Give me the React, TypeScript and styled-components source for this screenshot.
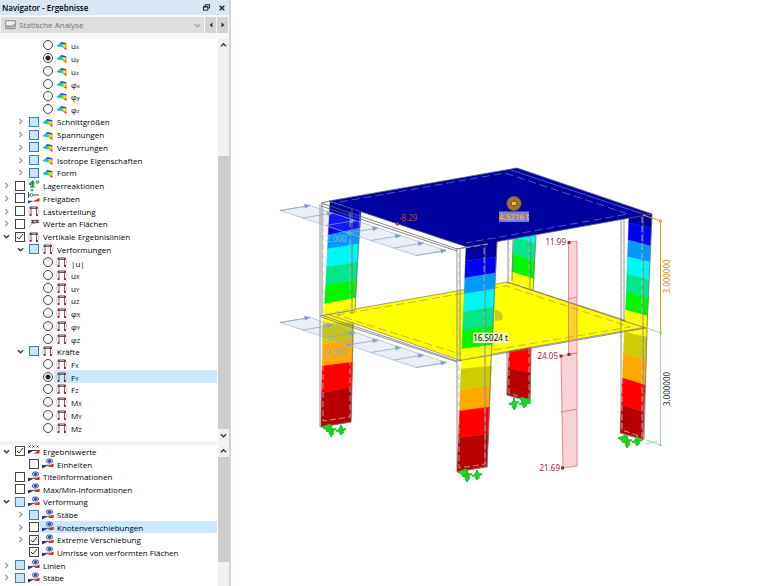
import React, { useState } from "react";
import styled, { createGlobalStyle } from "styled-components";

const GlobalStyle = createGlobalStyle`
  *, *::before, *::after { box-sizing: border-box; }
  html, body, #root { height: 100%; }
  body {
    margin: 0;
    background: #fff;
    color: #000008;
    font-family: "Open Sans", "Noto Sans", sans-serif;
    font-size: 8px;
    line-height: 12px;
  }
  button, select, input { font: inherit; color: inherit; }
`;

const Page = styled.div`
  display: flex;
  height: 100vh;
  overflow: hidden;
`;

const Navigator = styled.aside`
  display: flex;
  flex-direction: column;
  flex: 0 0 231px;
  border-right: 2px solid #d2d2de;
  background: #fff;
`;

const TitleBar = styled.header`
  display: flex;
  align-items: center;
  flex: 0 0 15px;
  padding: 0 0 0 2px;
  background: #d9e7f5;
`;

const Title = styled.h1`
  flex: 1;
  margin: 0;
  font-size: 8px;
  font-weight: 600;
  line-height: 14px;
`;

const TitleButton = styled.button`
  display: grid;
  place-items: center;
  width: 15px;
  height: 14px;
  padding: 0;
  border: 0;
  background: none;
`;

const Toolbar = styled.div`
  display: flex;
  gap: 1px;
  flex: 0 0 24px;
  padding: 2px 1px 6px 1px;
  background: #f6f6f6;
`;

const Combo = styled.label`
  display: flex;
  align-items: center;
  flex: 1;
  gap: 3px;
  padding: 0 3px 0 4px;
  background: #dedede;
`;

const ComboSelect = styled.select`
  flex: 1;
  min-width: 0;
  padding: 0;
  border: 0;
  appearance: none;
  background: none;
  color: #757575;
  opacity: 1;
`;

const StepButton = styled.button`
  display: grid;
  place-items: center;
  width: 11px;
  padding: 0;
  border: 0;
  background: #d4d4d4;
`;

const TreePane = styled.section<{ $rows: number; $gap?: boolean }>`
  display: flex;
  flex: ${(p) => p.$rows} 1 0;
  min-height: 0;
  ${(p) => p.$gap && "border-bottom: 4px solid #f4f4f4; flex-basis: 9px;"}
`;

const Tree = styled.ul<{ $pad: number }>`
  display: grid;
  grid-auto-rows: 1fr;
  flex: 1;
  margin: 0;
  padding: 0 1px ${(p) => p.$pad}px 0;
  list-style: none;
`;

const Row = styled.li<{ $level: number }>`
  display: flex;
  align-items: center;
  min-height: 0;
  padding-left: ${(p) => p.$level * 14}px;
`;

const Expander = styled.button`
  display: grid;
  place-items: center;
  flex: 0 0 15px;
  height: 10px;
  padding: 0 2px 0 0;
  border: 0;
  background: none;
`;

const Spacer = styled.span`
  flex: 0 0 15px;
`;

const Check = styled.input<{ $partial?: boolean }>`
  flex: none;
  width: 10px;
  height: 10px;
  margin: 0;
  appearance: none;
  border: 1px solid ${(p) => (p.$partial ? "#3f7fb5" : "#444")};
  background: ${(p) => (p.$partial ? "#cce4f7" : "#fff")};
  &:checked {
    background: #fff
      url("data:image/svg+xml,%3Csvg xmlns='http://www.w3.org/2000/svg' viewBox='0 0 8 8'%3E%3Cpath d='M1 4l2 2 4-5' fill='none' stroke='%23333'/%3E%3C/svg%3E");
  }
`;

const Radio = styled.input`
  flex: none;
  width: 10px;
  height: 10px;
  margin: 0;
  appearance: none;
  border: 1px solid #444;
  border-radius: 50%;
  background: #fff;
  &:checked {
    background: radial-gradient(circle, #222 0 2px, #fff 3px);
  }
`;

const ItemLabel = styled.label<{ $selected?: boolean }>`
  display: flex;
  align-items: center;
  align-self: stretch;
  flex: 1;
  gap: 3px;
  margin-left: 1px;
  padding-left: 2px;
  white-space: nowrap;
  background: ${(p) => (p.$selected ? "#cce8ff" : "transparent")};
`;

const ItemText = styled.span<{ $low?: boolean }>`
  padding-top: ${(p) => (p.$low ? 3 : 1)}px;
  line-height: 10px;
  font-weight: 500;
`;

const Sub = styled.span`
  font-size: 6px;
`;

const Scroll = styled.div`
  display: flex;
  flex-direction: column;
  flex: 0 0 11px;
  background: #f0f0f0;
`;

const ScrollButton = styled.button`
  display: grid;
  place-items: center;
  flex: 0 0 12px;
  padding: 0;
  border: 0;
  background: #f0f0f0;
`;

const Track = styled.div<{ $before: number; $thumb: number; $after: number }>`
  display: grid;
  flex: 1;
  grid-template-rows: ${(p) => `${p.$before}fr ${p.$thumb}fr ${p.$after}fr`};
`;

const Thumb = styled.div`
  grid-row: 2;
  background: #cdcdcd;
`;

const Viewport = styled.main`
  flex: 1;
  min-width: 0;
  overflow: hidden;
`;

const Scene = styled.svg`
  display: block;
  width: 100%;
  height: 100%;
`;

const Icon = styled.svg`
  flex: none;
  display: block;
`;

type IconKind = "surface" | "frame" | "support" | "release" | "values" | "xxx" | "deform";

function Chevron({ dir, color = "#333", size = 7 }: { dir: "up" | "down" | "right"; color?: string; size?: number }) {
  const d = { up: "M1 5l3-3 3 3", down: "M1 2.500l3 3 3-3", right: "M2.500 1l3 3-3 3" }[dir];
  return (
    <Icon width={size} height={size} viewBox="0 0 8 8" aria-hidden="true">
      <path d={d} fill="none" stroke={color} strokeWidth="1.5" />
    </Icon>
  );
}

function ItemIcon({ kind }: { kind: IconKind }) {
  return (
    <Icon width="12" height="12" viewBox="0 0 12 12" aria-hidden="true">
      {kind === "surface" && (
        <>
          <path d="M.5 7L4 4.200 10.500 5l-.2 5.800-3.500-2.400z" fill="url(#rainbow)" />
          <path d="M.5 7L4 4.200l2.500.4L4.500 7.800z" fill="#12bdf2" />
          <path d="M3.500 4.300L5.500 3l4.800 1.300v1.200z" fill="#1b43dc" />
          <path d="M7 8.500l3.300 2.500.1-2.200z" fill="#ee3512" />
        </>
      )}
      {kind === "frame" && (
        <>
          <path d="M3 10V3.500h5.500V10" fill="none" stroke="#666" />
          <path d="M.8 9V4M10.700 9V4" stroke="#bbb" strokeWidth=".8" />
          <path d="M2 2h7.500" stroke="#444" />
          <path d="M1.500 2h2v2h-2zM8 2h2v2H8zM1.500 9h2v2h-2zM8 9h2v2H8z" fill="#b52436" />
        </>
      )}
      {kind === "support" && (
        <>
          <path d="M4.500 1v6M1.500 4h5" stroke="#1c8c42" strokeWidth="1.300" />
          <path d="M4.500 0L6.700 3H2.300zM.5 4L2.500 6V2zM4.500 4.500L7.500 7.500h-6z" fill="#159447" />
          <circle cx="4" cy="10" r="1.600" fill="#55b875" />
          <circle cx="9.500" cy="2" r="1.400" fill="#9ed4ae" stroke="#3aa460" />
        </>
      )}
      {kind === "release" && (
        <>
          <path d="M.5 0v6M1 3h10" stroke="#555" />
          <circle cx="3.500" cy="3" r="1.500" fill="#fff" stroke="#278a72" />
          <path d="M0 11.500V8.500l5 .5z" fill="#1540aa" />
          <path d="M11.500 6v3.500H4.500z" fill="#df2721" />
        </>
      )}
      {kind === "values" && (
        <>
          <path d="M1 9.500l3-4h3" fill="none" stroke="#aaa" />
          <path d="M3.500 2l3 3m0-3l-3 3M7.500 2l3 3m0-3l-3 3" stroke="#333" strokeWidth="1.300" />
        </>
      )}
      {kind === "xxx" && (
        <>
          <path d="M.5.5l2 2m0-2l-2 2M4.500.5l2 2m0-2l-2 2M8.500.5l2 2m0-2l-2 2" stroke="#222" strokeWidth=".8" />
          <path d="M0 5.500h11.500" stroke="#444" />
          <path d="M0 9V5.500l5 .3z" fill="#15309a" />
          <path d="M11.500 5v3.500H5.500z" fill="#df2721" />
        </>
      )}
      {kind === "deform" && (
        <>
          <ellipse cx="7.500" cy="3" rx="3.300" ry="2.200" fill="#b4c0e0" stroke="#41599c" strokeWidth=".8" />
          <circle cx="7.500" cy="3" r="1.500" fill="#27418f" />
          <path d="M0 7.500l11.500-.5" stroke="#444" />
          <path d="M0 10.500V7.500l5.500.3z" fill="#15309a" />
          <path d="M11.500 5.500V9H6z" fill="#df2721" />
        </>
      )}
    </Icon>
  );
}

interface Item {
  id: string;
  level: number;
  text: string;
  sub?: string;
  icon: IconKind;
  open?: boolean;
  state?: "off" | "on" | "partial";
  group?: string;
  selected?: boolean;
}

const radios = (group: string, icon: IconKind, names: string[]): Item[] =>
  names.map((n) => {
    const [text, sub] = n.split("_");
    return { id: `${group}-${n}`, level: 2, text, sub, icon, group, selected: group === "force" && n === "F_Y" };
  });

const branch = (level: number, text: string, icon: IconKind, state: Item["state"], open?: boolean, selected?: boolean): Item => ({
  id: `${level}-${icon}-${text}`,
  level,
  text,
  icon,
  state,
  open,
  selected,
});

const results: Item[] = [
  ...radios("surface", "surface", ["u_x", "u_y", "u_z", "φ_x", "φ_y", "φ_z"]),
  ...["Schnittgrößen", "Spannungen", "Verzerrungen", "Isotrope Eigenschaften", "Form"].map((t) =>
    branch(1, t, "surface", "partial", false)
  ),
  branch(0, "Lagerreaktionen", "support", "off", false),
  branch(0, "Freigaben", "release", "off", false),
  branch(0, "Lastverteilung", "frame", "off", false),
  branch(0, "Werte an Flächen", "values", "off", false),
  branch(0, "Vertikale Ergebnislinien", "frame", "on", true),
  branch(1, "Verformungen", "frame", "partial", true),
  ...radios("line", "frame", ["|u|", "u_X", "u_Y", "u_Z", "φ_X", "φ_Y", "φ_Z"]),
  branch(1, "Kräfte", "frame", "partial", true),
  ...radios("force", "frame", ["F_X", "F_Y", "F_Z", "M_X", "M_Y", "M_Z"]),
];

const display: Item[] = [
  branch(0, "Ergebniswerte", "xxx", "on", true),
  branch(1, "Einheiten", "deform", "off"),
  branch(0, "Titelinformationen", "deform", "off"),
  branch(0, "Max/Min-Informationen", "deform", "off"),
  branch(0, "Verformung", "deform", "partial", true),
  branch(1, "Stäbe", "deform", "partial", false),
  branch(1, "Knotenverschiebungen", "deform", "off", false, true),
  branch(1, "Extreme Verschiebung", "deform", "on", false),
  branch(1, "Umrisse von verformten Flächen", "deform", "on"),
  branch(0, "Linien", "deform", "partial", false),
  branch(0, "Stäbe", "deform", "partial", false),
];

function TreeRow({ item }: { item: Item }) {
  const [checked, setChecked] = useState(item.state === "on");
  return (
    <Row $level={item.level}>
      {item.open === undefined ? (
        <Spacer />
      ) : (
        <Expander aria-label={item.text} aria-expanded={item.open}>
          <Chevron dir={item.open ? "down" : "right"} color={item.open ? "#333" : "#999"} />
        </Expander>
      )}
      {item.group ? (
        <Radio
          type="radio"
          id={item.id}
          name={item.group}
          defaultChecked={item.id === "surface-u_y" || item.id === "force-F_Y"}
        />
      ) : (
        <Check
          type="checkbox"
          id={item.id}
          $partial={item.state === "partial"}
          checked={checked}
          onChange={() => setChecked(!checked)}
        />
      )}
      <ItemLabel htmlFor={item.id} $selected={item.selected}>
        <ItemIcon kind={item.icon} />
        <ItemText $low={!!item.group}>
          {item.text}
          {item.sub && <Sub>{item.sub}</Sub>}
        </ItemText>
      </ItemLabel>
    </Row>
  );
}

type Pt = [number, number];
const pts = (p: Pt[]) => p.map((q) => q.join(",")).join(" ");
const ramp = ["#0000a0", "#0000f5", "#0099ff", "#00f5f5", "#00e68a", "#00f500", "#ffff00", "#cdcd00", "#ffa800", "#ff0000", "#b90000"];

interface Side {
  x: [number, number];
  y: number[];
}

/* A strip of colour bands between two slanted edges. */
function Bands({ left, right, from = 0 }: { left: Side; right: Side; from?: number }) {
  const at = (s: Side, i: number): Pt => {
    const a = s.y[0];
    const b = s.y[s.y.length - 1];
    return [s.x[0] + ((s.x[1] - s.x[0]) * (s.y[i] - a)) / (b - a), s.y[i]];
  };
  return (
    <>
      {left.y.slice(1).map((_, i) => (
        <polygon
          key={i}
          points={pts([at(left, i), at(right, i), at(right, i + 1), at(left, i + 1)])}
          fill={ramp[from + i]}
          stroke={ramp[from + i]}
          strokeWidth=".4"
        />
      ))}
    </>
  );
}

function Load({ y }: { y: number }) {
  return (
    <g transform={`translate(280 ${y})`} stroke="#83a0c8" strokeWidth=".7">
      <polygon points="0,0 30,-5 166,40 136,45" fill="#8296be" fillOpacity=".16" stroke="#a3b6d2" />
      {[0, 1, 2, 3, 4, 5, 6].map((i) => {
        const x = i * 22.7;
        const t = i * 7.5;
        return (
          <g key={i}>
            <path d={`M${x} ${t}L${x + 26} ${t - 4.300}`} />
            <path d={`M${x + 30} ${t - 5}l-5.500-1.200.8 3.700z`} fill="#83a0c8" />
          </g>
        );
      })}
      <rect x="67" y="21.500" width="2" height="2" fill="#83a0c8" />
    </g>
  );
}

function Support({ x, y, flip }: { x: number; y: number; flip?: boolean }) {
  return (
    <g transform={`translate(${x} ${y})`} fill="#22d322" stroke="#1bc42a" strokeWidth="1">
      <path d="M0-5v11M-5 1l10-2M10-5v9M5 1l10-2" fill="none" strokeWidth="2" />
      <path d="M0-4l3 6h-6zM10-5l3 6H7zM-2 3h5l-3 4zM8 2h5l-3 3z" />
      <path d={flip ? "M6-5l9 1 2 4-8 1z" : "M-9-3l8-3 2 5-4 2z"} />
    </g>
  );
}

function Model() {
  return (
    <Scene
      viewBox="231 0 529 586"
      preserveAspectRatio="xMinYMin meet"
      role="img"
      aria-label="Gebäudemodell"
      fontFamily="Noto Sans, Open Sans, sans-serif"
      fontSize="8"
    >
      {/* rear column */}
      <Bands from={3} left={{ x: [514, 511], y: [235, 237, 254, 272, 287] }} right={{ x: [536, 533], y: [233, 243, 261, 279, 295] }} />
      <Bands from={9} left={{ x: [509, 507], y: [348, 368, 395] }} right={{ x: [531, 530], y: [345, 373, 401] }} />
      <g fill="none" stroke="#777" strokeWidth=".8">
        <path d="M508 239v44l24 8M530 235v55M513 237l-1 44M536 235l-3 57" />
        <path d="M507 350v45l23 7 1-55" />
        <path d="M509 239v42M529 237v50M509 352v41l20 7v-51" stroke="#b9b9b9" strokeDasharray="6 3" />
      </g>

      {/* lower storey columns */}
      <Bands from={6} left={{ x: [323, 321], y: [315, 324, 344, 366, 393, 427] }} right={{ x: [354, 351], y: [315, 322, 340, 362, 387, 422] }} />
      <Bands from={6} left={{ x: [625, 620], y: [316, 332, 353, 378, 405, 433] }} right={{ x: [648, 643], y: [316, 337, 361, 385, 412, 439] }} />

      {/* middle slab */}
      <polygon points="327,314 507,282 646,327 459,360" fill="#ff0" stroke="#8b8b5a" strokeWidth=".8" />
      <path d="M337 315L506 286 630 327 463 355z" fill="none" stroke="#a8a843" strokeWidth=".8" strokeDasharray="8 4" />
      <path d="M321 315l136 46M321 317l136 45M459 361l187-33M507 282l139 46" stroke="#777" strokeWidth=".8" fill="none" />
      <path d="M495 310a7 7 0 017 10l-7 1z" fill="#b9b928" opacity=".75" />

      {/* upper left column */}
      <Bands left={{ x: [330, 324], y: [202, 214, 235, 249, 267, 285, 304, 315] }} right={{ x: [361, 355], y: [211, 214, 228, 244, 262, 280, 298, 309] }} />
      <g fill="none" stroke="#777" strokeWidth=".8">
        <path d="M320 204v223M322 204v112M352 209v105M360 212l-5 98M353 324l-2 98-31 5M320 316l35-6" />
        <path d="M323 208v107M350 212v98M323 329v92l27-4v-90M325 314l25-5" stroke="#bbb" strokeDasharray="6 3" />
      </g>

      {/* upper right column */}
      <Bands left={{ x: [629, 625], y: [216, 223, 240, 257, 274, 292, 310, 324] }} right={{ x: [652, 647], y: [214, 228, 246, 262, 280, 298, 316, 328] }} />
      <g fill="none" stroke="#777" strokeWidth=".8">
        <path d="M621 219v214l22 7M624 218v104M643 215v225M652 215l-5 113-3 112M621 320l25 8" />
        <path d="M622 222v98M642 217v107M622 333v97l20 7V329" stroke="#c9c9c9" strokeDasharray="6 3" />
      </g>

      {/* top slab */}
      <polygon points="329,201 517,168 652,214 467,247" fill="#0000a0" stroke="#555a7d" strokeWidth=".8" />
      <g fill="none" stroke="#7478b8" strokeWidth=".7">
        <path d="M340 202L505 173 628 214 466 243" strokeDasharray="8 4" />
        <path d="M511 170l135 45" />
      </g>
      <path d="M321 203l136 46 16-3M321 206l136 45M321 203l9-2" stroke="#666" fill="none" strokeWidth=".8" />

      {/* front column */}
      <Bands
        left={{ x: [466, 457], y: [247, 261, 278, 294, 312, 330, 349, 369, 390, 411, 438, 472] }}
        right={{ x: [497, 487], y: [241, 257, 273, 289, 307, 326, 345, 366, 386, 407, 434, 467] }}
      />
      <g fill="none" stroke="#777" strokeWidth=".8">
        <path d="M457 249v223l31-6M460 249v111M485 246v221M497 242l-6 120-4 105M457 361l35-6M456 249l31-5" />
        <path d="M459 253v104M484 248v108M459 365v103l26-4V361M461 360l27-6M465 248l23-4" stroke="#b5b5b5" strokeDasharray="6 3" />
      </g>

      <Load y={210.5} />
      <Load y={322.5} />
      <g fill="#8fb0d6">
        <text x="326" y="242">2.000</text>
        <text x="326" y="355">2.000</text>
      </g>

      <Support x={331} y={430} />
      <Support x={467} y={475} />
      <Support x={514} y={403} flip />
      <Support x={627} y={441} />

      {/* vertical result line */}
      <g fill="#df7782" fillOpacity=".32" stroke="#f26c6c" strokeWidth=".8">
        <path d="M568.500 242.500L577 241v112l-8.500 1zM568.500 299l8.500-2" />
        <path d="M561 356l16-3v113l-14 2zM561 412l16-3" />
      </g>
      <g fill="#9b2638">
        <path d="M567.500 241h3v3h-3zM567.500 353h3v3h-3zM559.500 354.500h3v3h-3zM561 466.500h3v3h-3z" />
        <text x="566" y="245" textAnchor="end">11.99</text>
        <text x="558" y="359" textAnchor="end">24.05</text>
        <text x="560" y="471" textAnchor="end">21.69</text>
      </g>
      <g fill="#b04050">
        <path d="M396 222.500h3v3h-3z" />
        <text x="399" y="221">-8.29</text>
      </g>

      {/* masses */}
      <circle cx="514" cy="203.500" r="7.500" fill="url(#mass)" />
      <rect x="512" y="202" width="4" height="3" fill="#ffb91f" />
      <rect x="499" y="211.500" width="30" height="10.500" fill="#8080d0" />
      <text x="514" y="220" textAnchor="middle" fill="#f5b030" fontWeight="600">4.5216 t</text>
      <rect x="473" y="332.500" width="35" height="10.500" fill="#f2f8d7" fillOpacity=".88" />
      <text x="490.500" y="341" textAnchor="middle" fill="#111">16.5024 t</text>

      {/* storey dimensions */}
      <g stroke="#dfa01d" fill="none">
        <path d="M643 215l17.500 6v112" />
        <path d="M659.500 220h2v2h-2zM659.500 332h2v1h-2z" />
      </g>
      <g stroke="#a9cfaf" fill="none">
        <path d="M647 328l13.500 5v112l-14-5M646 443.500l11-2" />
        <path d="M659.500 332.500h2v1h-2zM659.500 444.500h2v1h-2z" />
      </g>
      <text transform="translate(669.5 276.500) rotate(-90)" textAnchor="middle" fill="#d08c00">3.000000</text>
      <text transform="translate(669.5 389) rotate(-90)" textAnchor="middle" fill="#18251b">3.000000</text>

      <defs>
        <radialGradient id="mass">
          <stop offset="0" stopColor="#70551c" />
          <stop offset=".7" stopColor="#a17b38" />
          <stop offset="1" stopColor="#735a35" />
        </radialGradient>
        <linearGradient id="rainbow">
          <stop offset=".2" stopColor="#16c4ee" />
          <stop offset=".5" stopColor="#39d635" />
          <stop offset=".8" stopColor="#f8e51d" />
          <stop offset="1" stopColor="#f29b16" />
        </linearGradient>
      </defs>
    </Scene>
  );
}

function ScrollBar({ before, thumb, after, end }: { before: number; thumb: number; after: number; end?: boolean }) {
  return (
    <Scroll>
      <ScrollButton aria-label="Nach oben">
        <Chevron dir="up" />
      </ScrollButton>
      <Track $before={before} $thumb={thumb} $after={after}>
        <Thumb />
      </Track>
      {end && (
        <ScrollButton aria-label="Nach unten">
          <Chevron dir="down" />
        </ScrollButton>
      )}
    </Scroll>
  );
}

export default function App() {
  return (
    <Page>
      <GlobalStyle />
      <Navigator>
        <TitleBar>
          <Title>Navigator - Ergebnisse</Title>
          <TitleButton aria-label="Abdocken">
            <Icon width="7" height="7" viewBox="0 0 7 7">
              <path d="M2 2V.700h4.500V4H5M.5 2.500h4.300v3.700H.5zM.5 3h4" fill="none" stroke="#222" />
            </Icon>
          </TitleButton>
          <TitleButton aria-label="Schließen">
            <Icon width="6" height="6" viewBox="0 0 6 6">
              <path d="M.7.7l4.600 4.600M5.300.7L.7 5.300" stroke="#222" strokeWidth="1.400" />
            </Icon>
          </TitleButton>
        </TitleBar>
        <Toolbar>
          <Combo>
            <Icon width="11" height="10" viewBox="0 0 11 10" aria-hidden="true">
              <path d="M.7.7h9.600v8H.7z" fill="#eee" stroke="#8c8c8c" />
              <path d="M1 6c3 1 6 1 9-2M1 6h9M2 8h7" fill="none" stroke="#888" />
            </Icon>
            <ComboSelect disabled aria-label="Analyse" defaultValue="s">
              <option value="s">Statische Analyse</option>
            </ComboSelect>
            <Chevron dir="down" color="#aaa" />
          </Combo>
          <StepButton aria-label="Zurück">
            <Icon width="4" height="6" viewBox="0 0 4 6">
              <path d="M3.500.5v5L.5 3z" fill="#333" />
            </Icon>
          </StepButton>
          <StepButton aria-label="Weiter">
            <Icon width="4" height="6" viewBox="0 0 4 6">
              <path d="M.5.5v5l3-2.500z" fill="#333" />
            </Icon>
          </StepButton>
        </Toolbar>
        <TreePane $rows={31} $gap>
          <Tree $pad={7}>
            {results.map((item) => (
              <TreeRow key={item.id} item={item} />
            ))}
          </Tree>
          <ScrollBar before={105} thumb={272} after={0} end />
        </TreePane>
        <TreePane $rows={11}>
          <Tree $pad={2}>
            {display.map((item) => (
              <TreeRow key={item.id} item={item} />
            ))}
          </Tree>
          <ScrollBar before={0} thumb={105} after={24} />
        </TreePane>
      </Navigator>
      <Viewport>
        <Model />
      </Viewport>
    </Page>
  );
}
